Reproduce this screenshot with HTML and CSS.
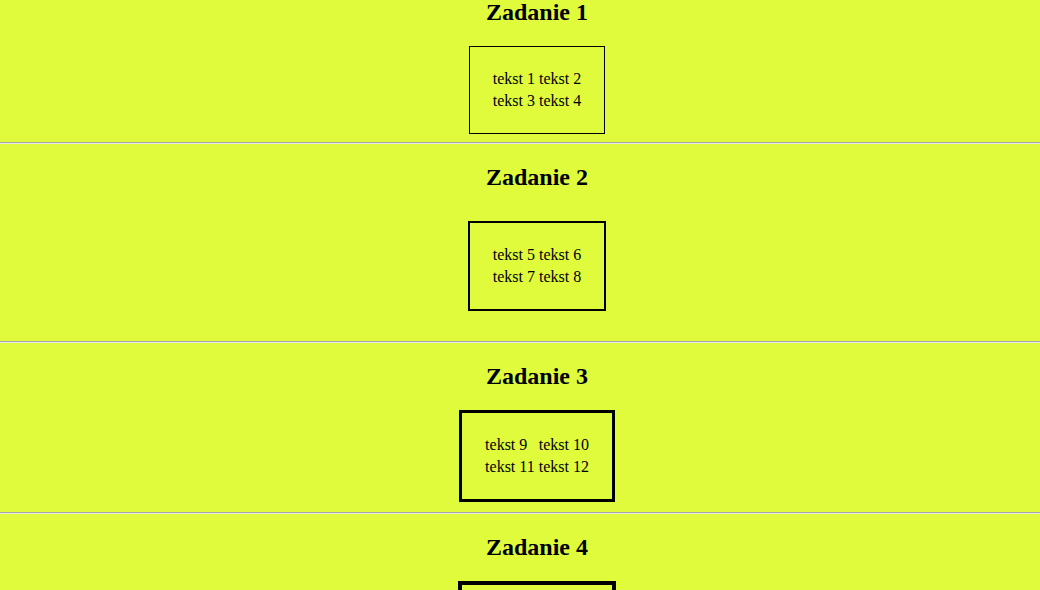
FILE: index.html
```html
<!DOCTYPE html>
<html lang="pl">
<head>
<meta charset="utf-8">
<title>Zadania</title>
<link rel="stylesheet" href="styles.css">
</head>
<body>
<section class="task task-first">
  <h2 class="task-title">Zadanie 1</h2>
  <table class="box box-1">
    <tr><td>tekst 1</td><td>tekst 2</td></tr>
    <tr><td>tekst 3</td><td>tekst 4</td></tr>
  </table>
</section>
<hr class="divider">
<section class="task">
  <h2 class="task-title">Zadanie 2</h2>
  <table class="box box-2">
    <tr><td>tekst 5</td><td>tekst 6</td></tr>
    <tr><td>tekst 7</td><td>tekst 8</td></tr>
  </table>
</section>
<hr class="divider">
<section class="task">
  <h2 class="task-title">Zadanie 3</h2>
  <table class="box box-3">
    <tr><td>tekst 9</td><td>tekst 10</td></tr>
    <tr><td>tekst 11</td><td>tekst 12</td></tr>
  </table>
</section>
<hr class="divider">
<section class="task">
  <h2 class="task-title">Zadanie 4</h2>
  <table class="box box-4">
    <tr><td>tekst 13</td><td>tekst 14</td></tr>
    <tr><td>tekst 15</td><td>tekst 16</td></tr>
  </table>
</section>
</body>
</html>
```

FILE: styles.css
```css
html, body {
  margin: 0;
  padding: 0;
}

body {
  background: #dffb3c;
  font-family: "Liberation Serif", "Times New Roman", serif;
  font-size: 16px;
  color: #000;
  overflow: hidden;
}

.task {
  padding-left: 34px;
}

.task-first {
  padding-top: 1px;
}

.task-first .task-title {
  margin-top: -2px;
}

.task-title {
  font-size: 24px;
  font-weight: bold;
  text-align: center;
  margin: 20px 0;
}

.box {
  margin: 0 auto;
  padding: 20px;
  border-style: solid;
  border-color: #000;
  border-spacing: 2px;
}

.box td {
  padding: 1px;
}

.box-1 { border-width: 1px; }
.box-2 { border-width: 2px; margin-top: 30px; margin-bottom: 30px; }
.box-3 { border-width: 3px; margin-bottom: 10px; }
.box-4 { border-width: 4px; }

.divider {
  margin: 8px 0;
  border: 0;
  border-top: 1px solid #a6a6a6;
  border-bottom: 1px solid #e8e8e8;
  height: 0;
}
```
